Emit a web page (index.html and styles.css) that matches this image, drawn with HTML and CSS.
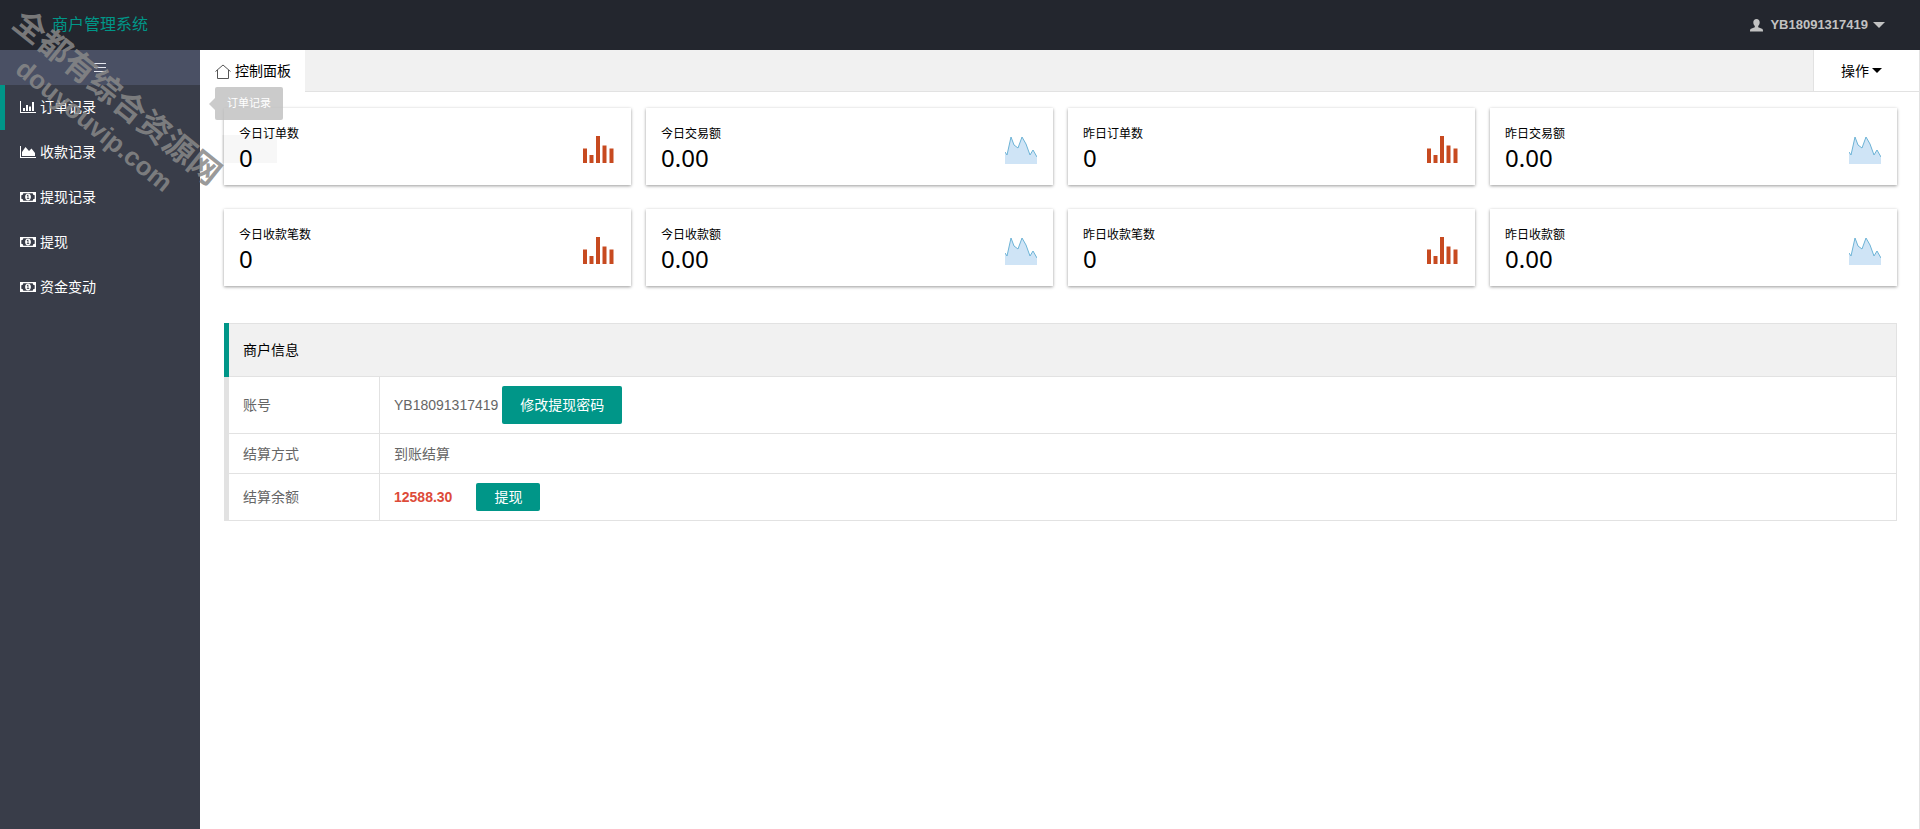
FILE: index.html
```html
<!DOCTYPE html>
<html lang="zh-CN">
<head>
<meta charset="utf-8">
<title>商户管理系统</title>
<link rel="stylesheet" href="styles.css">
</head>
<body>
<svg class="sprite" aria-hidden="true">
  <symbol id="bars" viewBox="0 0 32 28"><path d="M0 12.500h4V27H0zM6.500 19h4v8h-4zM13 0h4v27h-4zM19.500 9.500h4V27h-4zM26.500 12.500h4V27h-4z"/></symbol>
  <symbol id="area" viewBox="0 0 32 28"><path class="area-fill" d="M0 16l2 3L6 1l3 8 4 3 4-11 4 7 4 11 3-5 4 7v7H0z"/><path class="area-line" d="M0 16l2 3L6 1l3 8 4 3 4-11 4 7 4 11 3-5 4 7"/></symbol>
  <symbol id="money" viewBox="0 0 16 12"><path fill-rule="evenodd" d="M0 1h16v10H0zM3.300 2.300A2 2 0 0 1 1.300 4.300v3.400a2 2 0 0 1 2 2h9.400a2 2 0 0 1 2-2V4.300a2 2 0 0 1-2-2z"/><path fill-rule="evenodd" d="M8 2.600c1.800 0 2.900 1.500 2.900 3.400S9.800 9.400 8 9.400 5.100 7.900 5.100 6 6.200 2.600 8 2.600zM6.700 4.600l.5.600.4-.3v2.300h-.8v.8h2.400v-.8h-.8V3.800h-.8z"/></symbol>
</svg>
<header class="topbar">
  <h1 class="brand">商户管理系统</h1>
  <button class="account" type="button">
    <svg class="user" viewBox="0 0 13 13"><path d="M6.500 0c2 0 3.200 1.400 3.200 3.300 0 1.600-.7 3-1.500 3.700v1.300l3.800 1.500c.8.400 1 1.200 1 2.200v.5H0V12c0-1 .2-1.800 1-2.200l3.800-1.500V7C4 6.300 3.300 4.900 3.300 3.300 3.300 1.400 4.500 0 6.500 0z"/></svg>
    <span>YB18091317419</span><i class="caret caret-lg"></i>
  </button>
</header>
<div class="shell">
  <aside class="side">
    <button class="toggle" type="button" aria-label="菜单"><svg viewBox="0 0 12 12"><path d="M0 1.500h12M0 5.500h12M0 9.500h12"/></svg></button>
    <nav class="menu">
      <a class="on" href="#"><svg viewBox="0 0 16 12"><path d="M0 0h1v11h15v1H0zM3 7h2v3H3zM6 4h2v6H6zM9 5.500h2V10H9zM12 1h2v9h-2z"/></svg>订单记录</a>
      <a href="#"><svg viewBox="0 0 16 12"><path d="M0 0h1v11h15v1H0zM2 10V6l3.500-5L9 5l2.500-2.500L15 7v3z"/></svg>收款记录</a>
      <a href="#"><svg><use href="#money"/></svg>提现记录</a>
      <a href="#"><svg><use href="#money"/></svg>提现</a>
      <a href="#"><svg><use href="#money"/></svg>资金变动</a>
    </nav>
  </aside>
  <main class="main">
    <div class="tabs">
      <a class="tab" href="#"><svg viewBox="0 0 16 15"><path d="M.5 7.500L8 1l7.500 6.500M2.500 6v8.500h11V6"/></svg>控制面板</a>
      <button class="ops" type="button">操作<i class="caret"></i></button>
    </div>
    <div class="content">
      <section class="cards">
        <div class="card"><div><p>今日订单数</p><strong>0</strong></div><svg class="bars"><use href="#bars"/></svg></div>
        <div class="card"><div><p>今日交易额</p><strong>0.00</strong></div><svg><use href="#area"/></svg></div>
        <div class="card"><div><p>昨日订单数</p><strong>0</strong></div><svg class="bars"><use href="#bars"/></svg></div>
        <div class="card"><div><p>昨日交易额</p><strong>0.00</strong></div><svg><use href="#area"/></svg></div>
        <div class="card"><div><p>今日收款笔数</p><strong>0</strong></div><svg class="bars"><use href="#bars"/></svg></div>
        <div class="card"><div><p>今日收款额</p><strong>0.00</strong></div><svg><use href="#area"/></svg></div>
        <div class="card"><div><p>昨日收款笔数</p><strong>0</strong></div><svg class="bars"><use href="#bars"/></svg></div>
        <div class="card"><div><p>昨日收款额</p><strong>0.00</strong></div><svg><use href="#area"/></svg></div>
      </section>
      <table class="info">
        <thead><tr><th colspan="2">商户信息</th></tr></thead>
        <tbody>
          <tr><th>账号</th><td><div class="cell"><span>YB18091317419</span><button class="btn" type="button">修改提现密码</button></div></td></tr>
          <tr><th>结算方式</th><td>到账结算</td></tr>
          <tr><th>结算余额</th><td><div class="cell wide"><b>12588.30</b><button class="btn small" type="button">提现</button></div></td></tr>
        </tbody>
      </table>
    </div>
  </main>
</div>
<div class="ghost"></div>
<div class="tip" role="tooltip">订单记录</div>
<div class="mark"><div>全都有综合资源网</div><div class="mark-url">douyouvip.com</div></div>
</body>
</html>
```
FILE: styles.css
```css
* { box-sizing: border-box; }
body {
  margin: 0;
  min-height: 100vh;
  display: flex;
  flex-direction: column;
  position: relative;
  font: 14px/20px "Liberation Sans", "Noto Sans CJK SC", sans-serif;
  color: #000;
  background: #fff;
}
button { font: inherit; border: 0; padding: 0; cursor: pointer; }
a { text-decoration: none; color: inherit; }
.sprite { position: absolute; width: 0; height: 0; }
.area-fill { fill: #cfe4f6; }
.area-line { fill: none; stroke: #6db3d6; stroke-width: 1; }

.topbar {
  height: 50px;
  background: #23262e;
  display: flex;
  align-items: center;
  justify-content: space-between;
  padding: 0 35px 0 52px;
}
.brand { margin: 0; font-size: 16px; line-height: 24px; font-weight: 400; color: #009688; }
.account { display: flex; align-items: center; background: none; color: #c2c2c2; font-size: 13px; font-weight: 700; }
.user { width: 13px; height: 13px; margin-right: 7px; fill: #c2c2c2; }
.caret {
  border: 5px solid transparent;
  border-top-color: currentColor;
  border-bottom: 0;
  margin-left: 3px;
}
.caret-lg { border-width: 6px; border-bottom: 0; margin-left: 5px; }

.shell { flex: 1; display: flex; }
.side { width: 200px; flex: none; background: #393d49; color: #fff; }
.toggle { display: flex; width: 100%; height: 35px; background: #4a5064; align-items: center; justify-content: center; }
.toggle svg { width: 12px; height: 12px; stroke: #e4e6ee; stroke-width: 1; }
.menu { display: flex; flex-direction: column; }
.menu a { height: 45px; display: flex; align-items: center; gap: 4px; padding: 0 0 2px 15px; border-left: 5px solid transparent; }
.menu .on { border-left-color: #009688; }
.menu svg { width: 16px; height: 12px; fill: #fff; }

.main { flex: 1; min-width: 0; border-right: 1px solid #e2e2e2; }
.tabs { height: 42px; display: flex; justify-content: space-between; background: #f1f1f1; border-bottom: 1px solid #e2e2e2; }
.tab { height: 42px; display: flex; align-items: center; gap: 4px; padding: 0 14px 0 15px; background: #fff; }
.tab svg { width: 16px; height: 15px; fill: none; stroke: #555; stroke-width: 1; }
.ops { display: flex; align-items: center; padding: 0 37px 0 27px; background: #fff; border-left: 1px solid #e2e2e2; }

.content { padding: 16px 22px 24px 24px; }
.cards { display: grid; grid-template-columns: repeat(4, 1fr); gap: 24px 15px; }
.card {
  height: 77px;
  display: flex;
  align-items: center;
  justify-content: space-between;
  padding: 3px 16px 0 15px;
  background: #fff;
  box-shadow: 0 1px 3px rgba(0, 0, 0, .4);
}
.card p { margin: 0; font-size: 12px; line-height: 20px; }
.card strong { display: block; font: 400 24px/28px "Noto Sans", sans-serif; }
.card svg { width: 32px; height: 28px; margin-top: 4px; }
.card .bars { fill: #c74a20; }

.info { width: 100%; margin-top: 37px; border-collapse: collapse; color: #666; }
.info th { text-align: left; font-weight: 400; }
.info th, .info td { border: 1px solid #e2e2e2; padding: 9px 14px; height: 40px; }
.info th { border-left: 5px solid #e2e2e2; }
.info tbody th { width: 153px; }
.info thead th { height: 53px; background: #f1f1f1; color: #000; border-left-color: #009688; }
.cell { display: flex; align-items: center; gap: 4px; }
.wide { gap: 24px; }
.wide b { color: #dd4b39; }
.btn { height: 38px; padding: 0 18px; background: #009688; color: #fff; border-radius: 2px; }
.small { height: 28px; }

.tip {
  position: absolute;
  left: 215px;
  top: 87px;
  width: 68px;
  height: 33px;
  background: rgba(190, 190, 190, .8);
  border-radius: 2px;
  color: #fff;
  font-size: 11px;
  line-height: 32px;
  text-align: center;
}
.tip::before {
  content: "";
  position: absolute;
  right: 100%;
  top: 11px;
  border: 6px solid transparent;
  border-right-color: rgba(190, 190, 190, .8);
  border-left: 0;
}
.ghost { position: absolute; left: 222px; top: 135px; width: 55px; height: 28px; background: rgba(0, 0, 0, .03); }
.mark {
  position: absolute;
  left: 107px;
  top: 110px;
  transform: translate(-50%, -50%) rotate(39deg);
  white-space: nowrap;
  text-align: center;
  font-size: 32px;
  line-height: 40px;
  font-weight: 700;
  color: rgba(136, 136, 136, .85);
  pointer-events: none;
}
.mark-url { font-size: 26px; line-height: 32px; }
```
